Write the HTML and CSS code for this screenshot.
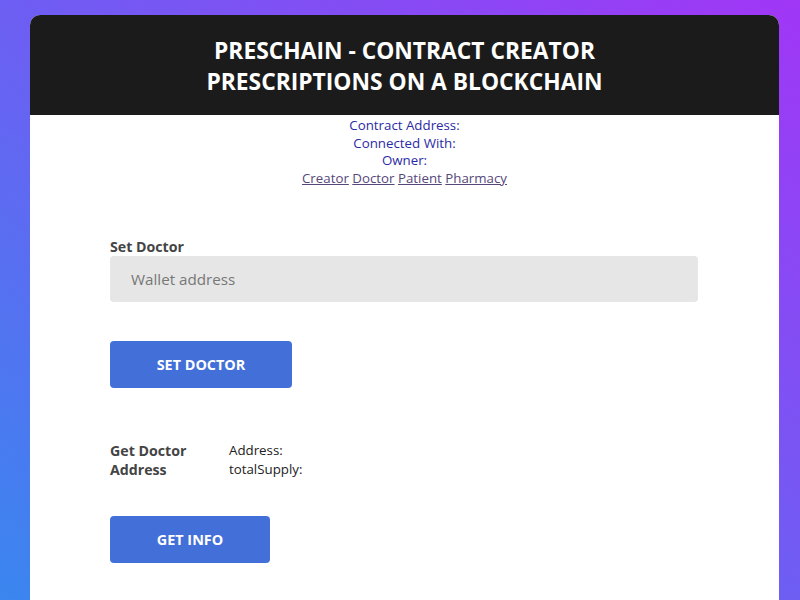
FILE: index.html
```html
<!DOCTYPE html>
<html>
<head>
<meta charset="utf-8">
<link rel="stylesheet" href="styles.css">
</head>
<body>
<div class="card">
  <header class="head">
    <h1>PRESCHAIN - CONTRACT CREATOR<br>PRESCRIPTIONS ON A BLOCKCHAIN</h1>
  </header>
  <div class="info">
    <div>Contract Address:</div>
    <div>Connected With:</div>
    <div>Owner:</div>
    <div class="links"><a href="#">Creator</a> <a href="#">Doctor</a> <a href="#">Patient</a> <a href="#">Pharmacy</a></div>
  </div>
  <div class="content">
    <label class="label">Set Doctor</label>
    <input class="field" type="text" placeholder="Wallet address">
    <button class="btn btn-set">SET DOCTOR</button>
    <div class="get">
      <div class="get-label">Get Doctor Address</div>
      <div class="get-vals">
        <div>Address:</div>
        <div>totalSupply:</div>
      </div>
    </div>
    <button class="btn btn-get">GET INFO</button>
  </div>
</div>
</body>
</html>
```
FILE: styles.css
```css
html, body {
  margin: 0;
  height: 100%;
}
body {
  background: linear-gradient(to top right, #3a86ef, #a136f6);
  font-family: "Open Sans", "Liberation Sans", sans-serif;
  overflow: hidden;
}
.card {
  margin: 15px 21px 0 30px;
  background: #fff;
  border-radius: 10px 10px 0 0;
  min-height: 620px;
  overflow: hidden;
}
.head {
  background: #1b1b1b;
  height: 100px;
  box-sizing: border-box;
  padding-top: 20px;
}
.head h1 {
  margin: 0;
  color: #fff;
  font-size: 22.8px;
  font-weight: 700;
  line-height: 31px;
  text-align: center;
}
.info {
  text-align: center;
  color: #2b2ba6;
  font-size: 13.3px;
  line-height: 17.7px;
  padding-top: 2px;
}
.info a {
  color: #56477a;
}
.content {
  display: flex;
  flex-direction: column;
  align-items: flex-start;
  padding: 50px 81px 0 80px;
}
.label {
  font-size: 14.2px;
  font-weight: 700;
  color: #444;
  line-height: 18px;
}
.field {
  box-sizing: border-box;
  width: 100%;
  height: 46px;
  margin-top: 0;
  border: none;
  border-radius: 4px;
  background: #e6e6e6;
  padding: 0 21px;
  font-family: inherit;
  font-size: 15.2px;
  color: #333;
  outline: none;
}
.field::placeholder {
  color: #777;
}
.btn {
  height: 47px;
  border: none;
  border-radius: 4px;
  background: #4270d8;
  color: #fff;
  font-family: inherit;
  font-size: 14.4px;
  font-weight: 700;
  padding: 0;
}
.btn-set {
  width: 182px;
  margin-top: 39px;
}
.get {
  display: flex;
  margin-top: 53px;
  line-height: 19px;
}
.get-label {
  width: 119px;
  font-size: 14.2px;
  font-weight: 700;
  color: #444;
  padding-right: 10px;
  box-sizing: border-box;
}
.get-vals {
  color: #222;
  font-size: 13.3px;
}
.btn-get {
  width: 160px;
  margin-top: 37px;
}
```
